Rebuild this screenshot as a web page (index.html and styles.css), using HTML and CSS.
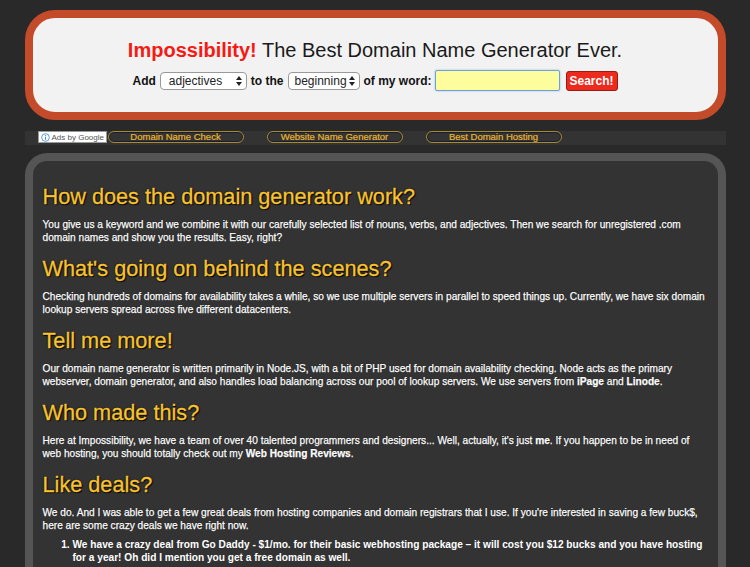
FILE: index.html
```html
<!DOCTYPE html>
<html lang="en">
<head>
  <meta charset="UTF-8" />
  <title>Impossibility! The Best Domain Name Generator Ever.</title>
  <link rel="stylesheet" href="styles.css">
</head>
<body>
  <div class="page">
    <header class="top-box">
      <h1 class="title"><span class="brand">Impossibility!</span> The Best Domain Name Generator Ever.</h1>
      <form class="gen-form" onsubmit="return false;">
        <label>Add</label>
        <span class="select-wrap wide">
          <select>
            <option>adjectives</option>
            <option>nouns</option>
            <option>verbs</option>
          </select>
          <svg class="arrows" width="6" height="10" viewBox="0 0 6 10"><path d="M3 0L6 4H0z M3 10L0 6H6z" fill="#222"/></svg>
        </span>
        <label>to the</label>
        <span class="select-wrap narrow">
          <select>
            <option>beginning</option>
            <option>end</option>
          </select>
          <svg class="arrows" width="6" height="10" viewBox="0 0 6 10"><path d="M3 0L6 4H0z M3 10L0 6H6z" fill="#222"/></svg>
        </span>
        <label>of my word:</label>
        <input type="text" class="word-input" />
        <button class="search-btn">Search!</button>
      </form>
    </header>

    <div class="ads-bar">
      <span class="ads-label">
        <svg width="9" height="9" viewBox="0 0 10 10"><circle cx="5" cy="5" r="4.3" fill="none" stroke="#4a90d9" stroke-width="1"/><rect x="4.4" y="4" width="1.2" height="3.6" fill="#4a90d9"/><rect x="4.4" y="2.2" width="1.2" height="1.1" fill="#4a90d9"/></svg>
        Ads by Google
      </span>
      <a href="#" class="ad-link">Domain Name Check</a>
      <a href="#" class="ad-link">Website Name Generator</a>
      <a href="#" class="ad-link">Best Domain Hosting</a>
    </div>

    <main class="content">
      <h2>How does the domain generator work?</h2>
      <p>You give us a keyword and we combine it with our carefully selected list of nouns, verbs, and adjectives. Then we search for unregistered .com domain names and show you the results. Easy, right?</p>

      <h2>What's going on behind the scenes?</h2>
      <p>Checking hundreds of domains for availability takes a while, so we use multiple servers in parallel to speed things up. Currently, we have six domain lookup servers spread across five different datacenters.</p>

      <h2>Tell me more!</h2>
      <p>Our domain name generator is written primarily in Node.JS, with a bit of PHP used for domain availability checking. Node acts as the primary webserver, domain generator, and also handles load balancing across our pool of lookup servers. We use servers from <a href="#">iPage</a> and <a href="#">Linode</a>.</p>

      <h2>Who made this?</h2>
      <p>Here at Impossibility, we have a team of over 40 talented programmers and designers... Well, actually, it's just <a href="#">me</a>. If you happen to be in need of web hosting, you should totally check out my <a href="#">Web Hosting Reviews</a>.</p>

      <h2>Like deals?</h2>
      <p>We do. And I was able to get a few great deals from hosting companies and domain registrars that I use. If you're interested in saving a few buck$, here are some crazy deals we have right now.</p>
      <ol class="deals">
        <li>We have a crazy deal from Go Daddy - $1/mo. for their basic webhosting package &ndash; it will cost you $12 bucks and you have hosting for a year! Oh did I mention you get a free domain as well.</li>
        <li>Need a domain name? Grab one for $7.49 with a coupon code at checkout.</li>
      </ol>
    </main>
  </div>
</body>
</html>
```

FILE: styles.css
```css
body {
  margin: 0;
  background: #292929;
  font-family: 'Liberation Sans', Arial, sans-serif;
}
.page {
  width: 701px;
  margin: 0 auto;
  padding-top: 10px;
}
.top-box {
  background: #f2f2f2;
  border: 8px solid #c44b29;
  border-radius: 30px;
  padding: 20px 0 21px;
  text-align: center;
}
.title {
  margin: 0 0 8px;
  font-size: 20px;
  line-height: 24px;
  font-weight: normal;
  color: #1a1a1a;
}
.brand {
  color: #f51a14;
  font-weight: bold;
}
.gen-form {
  display: flex;
  justify-content: center;
  align-items: center;
  height: 21px;
  gap: 4px;
  font-size: 12px;
}
.gen-form label {
  font-weight: bold;
  color: #111;
}
.select-wrap {
  position: relative;
  display: inline-block;
}
.select-wrap select {
  appearance: none;
  -webkit-appearance: none;
  height: 18px;
  padding: 0 0 0 8px;
  border: 1px solid #9a9a9a;
  border-radius: 4px;
  background: #fff;
  font-family: 'Liberation Sans', Arial, sans-serif;
  font-size: 12px;
  color: #222;
  box-sizing: border-box;
}
.select-wrap.wide select { width: 87px; }
.select-wrap.narrow select { width: 72px; padding-left: 6px; }
.arrows {
  position: absolute;
  right: 5px;
  top: 4px;
  pointer-events: none;
}
.word-input {
  width: 125px;
  height: 21px;
  box-sizing: border-box;
  margin-left: -1px;
  background: #fdfd9e;
  border: 1px solid #6fa0d8;
  border-radius: 2px;
  box-shadow: 0 0 2px #8bb8ea;
  outline: none;
}
.search-btn {
  height: 20px;
  width: 52px;
  padding: 0;
  margin-left: 2px;
  background: #ec2a1d;
  border: 1px solid #9b1b12;
  border-radius: 3px;
  color: #fff;
  font-family: 'Liberation Sans', Arial, sans-serif;
  font-size: 12px;
  font-weight: bold;
}
.ads-bar {
  margin-top: 11px;
  height: 14px;
  background: #333;
  display: flex;
  align-items: flex-start;
  padding-left: 13px;
}
.ads-label {
  display: flex;
  align-items: center;
  gap: 2px;
  width: 69px;
  height: 12px;
  box-sizing: border-box;
  padding-left: 2px;
  background: #fff;
  border: 1px solid #999;
  font-size: 8px;
  color: #555;
  white-space: nowrap;
}
.ad-link {
  width: 136px;
  height: 12px;
  box-sizing: border-box;
  margin-left: 1px;
  margin-right: 22px;
  border: 1px solid #a58a35;
  border-radius: 7px;
  box-shadow: inset 0 0 0 1px #1c1c2a;
  color: #e8b530;
  font-size: 9.5px;
  line-height: 10px;
  text-align: center;
  text-decoration: none;
  -webkit-text-stroke: 0.2px #e8b530;
}
.content {
  margin-top: 8px;
  background: #333;
  border: 8px solid #555;
  border-radius: 22px;
  border-bottom: none;
  padding: 22px 8px 20px 12px;
  color: #fff;
}
.content h2 {
  margin: 0 0 7px -2px;
  font-size: 21.7px;
  line-height: 28px;
  font-weight: normal;
  color: #f7c331;
  text-shadow: 0 0 2px #000, 1px 1px 1px #000;
  -webkit-text-stroke: 0.3px #f7c331;
}
.content p {
  margin: 0 0 11px -2px;
  font-size: 10.15px;
  line-height: 13px;
  text-shadow: 0 0 1px #000;
  -webkit-text-stroke: 0.25px #fff;
}
.content a {
  color: #fff;
  font-weight: bold;
  text-decoration: none;
}
.deals {
  margin: -5px 0 0;
  padding-left: 28px;
  font-size: 10.15px;
  line-height: 13px;
  font-weight: bold;
}
.deals li {
  margin-bottom: 6px;
}
```
